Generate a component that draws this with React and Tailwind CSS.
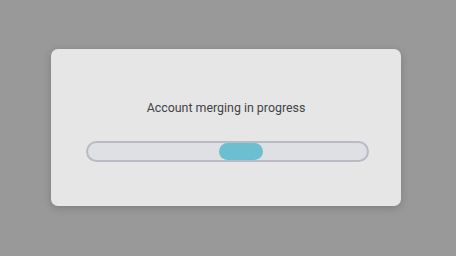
export default function App() {
  return (
    <div className="flex h-[256px] w-[456px] items-start bg-[#999999] pl-[51px] pt-[49px] font-['Roboto',sans-serif]">
      <div className="flex h-[157px] w-[350px] flex-col rounded-[7px] bg-[#e6e6e6] shadow-[0_2px_8px_rgba(0,0,0,0.18)]">
        <p className="mt-[51px] text-center text-[12.4px] leading-[16px] text-[#444446]">Account merging in progress</p>
        <div className="relative ml-[35px] mt-[25px] h-[21px] w-[283px] rounded-full border-2 border-[#b8bbc4] bg-[#dfe0e4]">
          <div className="absolute left-[131px] top-[0px] h-[17px] w-[44px] rounded-full bg-[#6bbfd1]" />
        </div>
      </div>
    </div>
  )
}
